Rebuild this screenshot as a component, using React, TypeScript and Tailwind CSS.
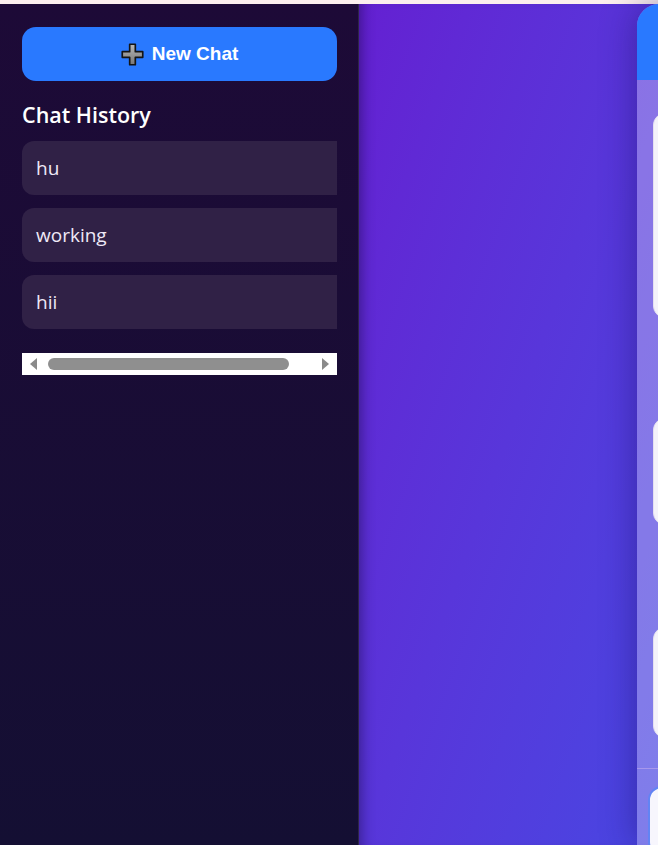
import React from "react";

const history = ["hu", "working", "hii"];

const PlusGlyph = () => (
  <svg width="23" height="23" viewBox="0 0 22 22" className="shrink-0">
    <defs>
      <linearGradient id="pg" x1="0" y1="0" x2="0" y2="1">
        <stop offset="0" stopColor="#b8b8b8" />
        <stop offset="1" stopColor="#777777" />
      </linearGradient>
    </defs>
    <path
      d="M8.3 1.2h5.4v7.1h7.1v5.4h-7.1v7.1h-5.4v-7.1h-7.1v-5.4h7.1z"
      fill="url(#pg)"
      stroke="#151515"
      strokeWidth="1.6"
      strokeLinejoin="round"
    />
  </svg>
);

export default function App() {
  return (
    <div className="w-[658px] h-[845px] overflow-hidden flex flex-col bg-[#fcefee]">
      <div className="h-[4px] shrink-0" />
      <div className="flex flex-1 min-h-0">
        {/* Sidebar */}
        <aside className="w-[359px] shrink-0 border-r border-[#2e2548] bg-gradient-to-b from-[#1d0a37] to-[#140f33] pl-[22px] pr-[21px] pt-[22px]">
          <button className="w-full h-[54px] mt-[1px] rounded-[14px] bg-[#2979ff] flex items-center justify-center gap-[8px] text-white text-[19px] font-bold font-['Liberation_Sans',Arial,sans-serif]">
            <PlusGlyph />
            <span>New Chat</span>
          </button>

          <h2 className="mt-[20px] mb-[12px] text-white text-[21.5px] font-semibold leading-[28px] font-['Open_Sans','Noto_Sans',sans-serif]">
            Chat History
          </h2>

          <div className="w-full overflow-hidden">
            <ul className="flex flex-col gap-[13px] w-[440px] pb-[24px]">
              {history.map((item) => (
                <li
                  key={item}
                  className="h-[54px] rounded-[12px] bg-[#302146] px-[14px] flex items-center text-[19px] text-[#efe9f7] font-['Open_Sans','Noto_Sans',sans-serif]"
                >
                  {item}
                </li>
              ))}
            </ul>
            {/* horizontal scrollbar */}
            <div className="h-[22px] bg-white flex items-center px-[8px] gap-[11px]">
              <span className="w-0 h-0 border-y-[6px] border-y-transparent border-r-[7px] border-r-[#8a8a8a]" />
              <span className="h-[12px] w-[241px] rounded-full bg-[#8f8f8f]" />
              <span className="flex-1" />
              <span className="w-0 h-0 border-y-[6px] border-y-transparent border-l-[7px] border-l-[#8a8a8a]" />
            </div>
          </div>
        </aside>

        {/* Main area */}
        <main className="flex-1 min-w-0 flex bg-gradient-to-br from-[#6420d2] to-[#4846e2] pl-[278px] shadow-[inset_12px_0_14px_-10px_rgba(10,0,40,0.45)]">
          <section className="w-[520px] shrink-0 flex flex-col rounded-tl-[22px] overflow-hidden bg-white/30 shadow-[0_0_36px_rgba(25,10,90,0.45)]">
            <header className="h-[76px] shrink-0 bg-[#2979ff]" />

            <div className="flex-1 flex flex-col pl-[16px] pt-[33px]">
              <div className="h-[205px] w-[360px] rounded-[12px] bg-[#f4f2fa] border border-[#e4e0f0]" />
              <div className="mt-[100px] h-[107px] w-[360px] rounded-[12px] bg-[#f4f2fa] border border-[#e4e0f0]" />
              <div className="mt-[102px] h-[111px] w-[360px] rounded-[12px] bg-[#f4f2fa] border border-[#e4e0f0]" />
            </div>

            <div className="h-[77px] shrink-0 border-t border-[#a797ec] pl-[11px] pt-[17px]">
              <div className="h-[70px] w-[400px] rounded-[14px] border-2 border-[#6284f4] bg-[#f7f6fd]" />
            </div>
          </section>
        </main>
      </div>
    </div>
  );
}
